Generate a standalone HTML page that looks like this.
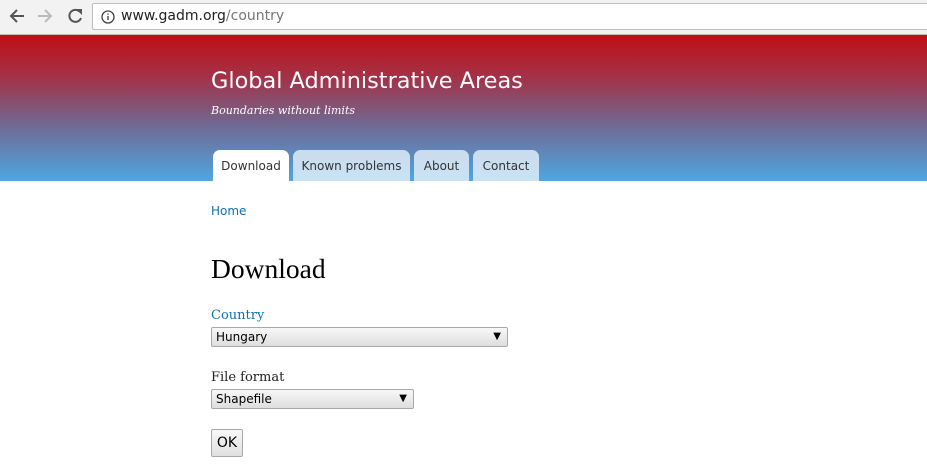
<!DOCTYPE html>
<html><head><style>
*{margin:0;padding:0;box-sizing:border-box}
body{width:927px;height:466px;overflow:hidden;background:#fff;font-family:"DejaVu Sans",sans-serif;position:relative}
.bar{position:absolute;left:0;top:0;width:927px;height:35px;background:#f2f2f2;border-bottom:1px solid #bdbdbd}
.url{position:absolute;left:92px;top:3px;width:840px;height:27px;background:#fff;border:1px solid #bfbfbf;border-radius:2px;font-size:14px;line-height:25px;padding-left:28px;color:#222}
.url span{color:#777}
.hdr{position:absolute;left:0;top:35px;width:927px;height:146px;background:linear-gradient(#bf0f14 0%,#a2334a 30%,#72668f 60%,#4fa6e2 100%)}
.t1{position:absolute;left:211px;top:68px;color:#fff;font-size:22.4px}
.t2{position:absolute;left:211px;top:104px;color:#fff;font-size:11px;font-style:italic;font-family:"DejaVu Serif",serif}
.tab{position:absolute;top:150px;height:31px;border-radius:7px 7px 0 0;background:linear-gradient(#cbdcee,#c8e3f5);font-size:12px;color:#333;text-align:center;line-height:32px}
.sel{position:absolute;height:20px;border:1px solid #a9a9a9;border-radius:2px;background:linear-gradient(#f8f8f8,#dedede);font-size:12px;line-height:18px;padding-left:4px;color:#000}
.sel i{position:absolute;right:6px;top:0;font-style:normal;font-size:10px}
.serif{font-family:"DejaVu Serif",serif}
</style></head><body>
<div class="bar">
<svg width="92" height="34" style="position:absolute;left:0;top:0">
<g stroke="#555" stroke-width="2" fill="none"><path d="M24 16H11M17 10l-6 6 6 6"/></g>
<g stroke="#bbb" stroke-width="2" fill="none"><path d="M38 16h13M45 10l6 6-6 6"/></g>
<path d="M80 12a6 6 0 1 0 1 6" stroke="#555" stroke-width="2" fill="none"/><path d="M76 9h6v6z" fill="#555"/>
</svg>
<div class="url"><svg width="14" height="14" style="position:absolute;left:8px;top:6px"><circle cx="7" cy="7" r="6" stroke="#444" stroke-width="1.3" fill="none"/><path d="M7 6v4M7 3.5v1.3" stroke="#444" stroke-width="1.4"/></svg>www.gadm.org<span>/country</span></div>
</div>
<div class="hdr"></div>
<div class="t1">Global Administrative Areas</div>
<div class="t2">Boundaries without limits</div>
<div class="tab" style="left:213px;width:76px;background:#fff">Download</div>
<div class="tab" style="left:293px;width:117px">Known problems</div>
<div class="tab" style="left:414px;width:55px">About</div>
<div class="tab" style="left:473px;width:66px">Contact</div>
<div style="position:absolute;left:211px;top:204px;font-size:12px;color:#0b72b5">Home</div>
<div style="position:absolute;left:211px;top:253px;font-size:27.5px;color:#000;font-family:'Liberation Serif',serif">Download</div>
<div class="serif" style="position:absolute;left:211px;top:308px;font-size:13px;color:#0b72b5">Country</div>
<div class="sel" style="left:211px;top:327px;width:297px">Hungary<i>▼</i></div>
<div class="serif" style="position:absolute;left:211px;top:370px;font-size:13px;color:#222">File format</div>
<div class="sel" style="left:211px;top:389px;width:203px">Shapefile<i>▼</i></div>
<div style="position:absolute;left:211px;top:429px;width:32px;height:28px;border:1px solid #a9a9a9;border-radius:2px;background:linear-gradient(#f8f8f8,#e0e0e0);font-size:14px;text-align:center;line-height:26px">OK</div>
</body></html>
